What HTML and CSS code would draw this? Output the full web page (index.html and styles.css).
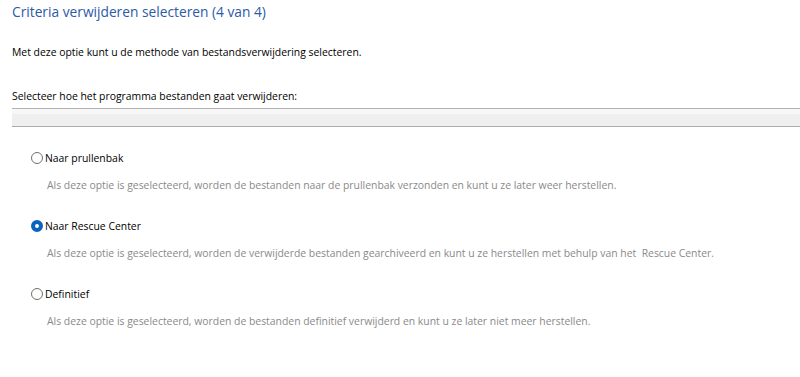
FILE: index.html
```html
<!DOCTYPE html>
<html lang="nl">
<head>
<meta charset="utf-8">
<title>Criteria verwijderen selecteren</title>
<link rel="stylesheet" href="styles.css">
</head>
<body>
<div class="page">
  <h1 class="title">Criteria verwijderen selecteren (4 van 4)</h1>
  <p class="intro">Met deze optie kunt u de methode van bestandsverwijdering selecteren.</p>
  <p class="prompt">Selecteer hoe het programma bestanden gaat verwijderen:</p>
  <div class="bar"></div>
  <div class="options">
    <div class="option">
      <div class="option-row"><span class="radio"></span><span class="label">Naar prullenbak</span></div>
      <p class="desc">Als deze optie is geselecteerd, worden de bestanden naar de prullenbak verzonden en kunt u ze later weer herstellen.</p>
    </div>
    <div class="option">
      <div class="option-row"><span class="radio checked"></span><span class="label">Naar Rescue Center</span></div>
      <p class="desc">Als deze optie is geselecteerd, worden de verwijderde bestanden gearchiveerd en kunt u ze herstellen met behulp van het &nbsp;Rescue Center.</p>
    </div>
    <div class="option">
      <div class="option-row"><span class="radio"></span><span class="label">Definitief</span></div>
      <p class="desc">Als deze optie is geselecteerd, worden de bestanden definitief verwijderd en kunt u ze later niet meer herstellen.</p>
    </div>
  </div>
</div>
</body>
</html>
```

FILE: styles.css
```css
html, body {
  margin: 0;
  padding: 0;
  background: #ffffff;
}
body {
  font-family: "Open Sans", "Noto Sans", sans-serif;
  font-size: 10.4px;
  color: #000000;
}
.page {
  padding: 3px 0 0 12px;
}
.title {
  margin: 0;
  font-size: 13.75px;
  font-weight: 400;
  color: #2b5aa6;
  line-height: 18px;
}
.intro {
  margin: 24px 0 0 0;
  line-height: 14px;
}
.prompt {
  margin: 30px 0 0 0;
  line-height: 14px;
}
.bar {
  margin-top: 5px;
  height: 17px;
  border-top: 1px solid #b4b4b4;
  border-bottom: 1px solid #acacac;
  background: linear-gradient(#f7f7f7 0, #f7f7f7 5px, #efefef 5px);
}
.options {
  padding: 24px 0 0 19px;
  display: flex;
  flex-direction: column;
  gap: 27px;
}
.option-row {
  display: flex;
  align-items: center;
  gap: 2px;
  height: 14px;
}
.radio {
  width: 10px;
  height: 10px;
  border: 1px solid #707070;
  border-radius: 50%;
  background: #ffffff;
  box-sizing: content-box;
}
.radio.checked {
  width: 4px;
  height: 4px;
  border: 4px solid #0a62c2;
}
.desc {
  margin: 13px 0 0 16px;
  line-height: 14px;
  color: #8a8a8a;
}
```
